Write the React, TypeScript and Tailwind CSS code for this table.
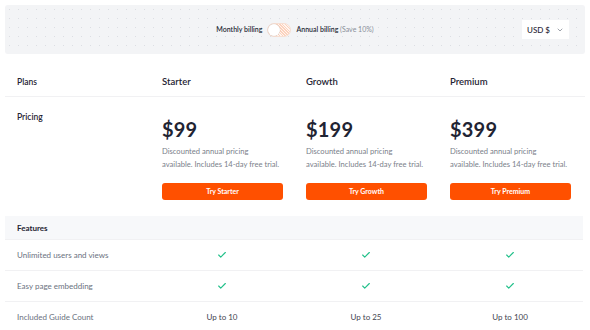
import { Check, ChevronDown } from "lucide-react";

const plans = [
  { name: "Starter", price: "$99", guides: "Up to 10" },
  { name: "Growth", price: "$199", guides: "Up to 25" },
  { name: "Premium", price: "$399", guides: "Up to 100" },
];

function Toggle() {
  return (
    <div className="relative w-[24px] h-[14px] rounded-full border border-[#f7dfd3] bg-[repeating-linear-gradient(45deg,#fcd2bd_0px,#fcd2bd_1px,#fff6f1_1px,#fff6f1_2px)]">
      <div className="absolute left-[0px] top-[0px] w-[12px] h-[12px] rounded-full bg-white shadow-[0_0_1px_rgba(0,0,0,0.25)]" />
    </div>
  );
}

function FeatureRow({ label, children }: { label: string; children: React.ReactNode[] }) {
  return (
    <div className="grid grid-cols-[145px_144px_144px_144px] h-[31px] items-center border-b border-[#f1f1f3] text-[8px] text-[#6b7280]">
      <div className="pl-[12px]">{label}</div>
      {children.map((c, i) => (
        <div key={i} className="flex justify-center">
          {c}
        </div>
      ))}
    </div>
  );
}

export default function App() {
  return (
    <div className="w-[590px] h-[330px] bg-white px-[5px] pt-[5px] font-['Lato',sans-serif] text-[#1f2433] overflow-hidden">
      <div className="h-[49px] rounded-[3px] bg-[#f3f4f6] bg-[radial-gradient(#dcdee3_0.6px,transparent_0.7px)] bg-[length:9px_9px] grid grid-cols-[1fr_auto_1fr] items-center px-[16px]">
        <div />
        <div className="flex items-center gap-[5px] text-[7px]">
          <span className="font-semibold text-[#2b2f3a]">Monthly billing</span>
          <Toggle />
          <span className="font-semibold text-[#2b2f3a]">
            Annual billing <span className="font-normal text-[#8a8f99]">(Save 10%)</span>
          </span>
        </div>
        <div className="flex justify-end">
          <div className="flex items-center gap-[6px] bg-white h-[19px] px-[5px] text-[8px] font-medium text-[#1f2433]">
            USD $
            <ChevronDown size={8} strokeWidth={2} className="text-[#6b7280]" />
          </div>
        </div>
      </div>

      <div className="w-[578px]">
        <div className="grid grid-cols-[145px_144px_144px_144px] pt-[22px] pb-[8px] border-b border-[#f1f1f3] w-[580px]">
          <div className="pl-[12px] text-[8.5px] font-semibold leading-[12px]">Plans</div>
          {plans.map((p) => (
            <div key={p.name} className="pl-[12px] text-[9.5px] font-semibold leading-[12px]">
              {p.name}
            </div>
          ))}
        </div>

        <div className="grid grid-cols-[145px_144px_144px_144px] pt-[14px] pb-[16px]">
          <div className="pl-[12px] text-[8.5px] font-semibold leading-[12px]">Pricing</div>
          {plans.map((p) => (
            <div key={p.name} className="pl-[12px] pt-[6px]">
              <div className="text-[20px] font-bold leading-[24px] tracking-[0.2px]">{p.price}</div>
              <p className="mt-[4px] text-[7.6px] leading-[13px] text-[#7b808a] whitespace-nowrap">
                Discounted annual pricing
                <br />
                available. Includes 14-day free trial.
              </p>
              <button className="mt-[12px] w-[121px] h-[17px] rounded-[3px] bg-[#ff5000] text-white text-[7px] font-bold">
                Try {p.name}
              </button>
            </div>
          ))}
        </div>

        <div className="h-[24px] bg-[#f7f8fa] flex items-center pl-[12px] text-[8px] font-bold border-b border-[#f1f1f3]">
          Features
        </div>

        <FeatureRow label="Unlimited users and views">
          {plans.map((p) => (
            <Check key={p.name} size={10} strokeWidth={2.75} className="text-[#22c08a]" />
          ))}
        </FeatureRow>
        <FeatureRow label="Easy page embedding">
          {plans.map((p) => (
            <Check key={p.name} size={10} strokeWidth={2.75} className="text-[#22c08a]" />
          ))}
        </FeatureRow>
        <FeatureRow label="Included Guide Count">
          {plans.map((p) => (
            <span key={p.name} className="text-[#3f4450]">
              {p.guides}
            </span>
          ))}
        </FeatureRow>
      </div>
    </div>
  );
}
